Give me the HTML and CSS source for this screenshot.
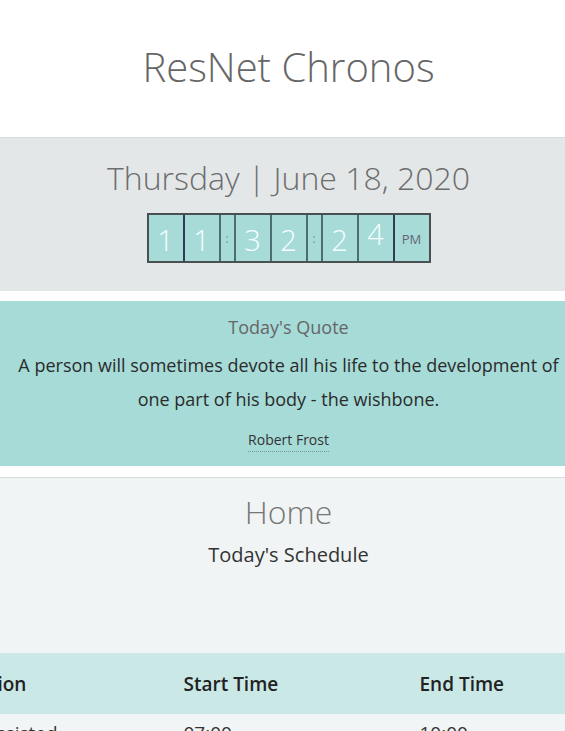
FILE: index.html
```html
<!DOCTYPE html>
<html lang="en">
<head>
<meta charset="utf-8">
<title>ResNet Chronos</title>
<link rel="stylesheet" href="styles.css">
</head>
<body>
<div class="page">
  <header class="brand">
    <h1 class="brand-title">ResNet Chronos</h1>
  </header>

  <section class="clock-panel">
    <h2 class="date">Thursday | June 18, 2020</h2>
    <div class="clock">
      <span class="cell digit">1</span>
      <span class="cell digit major">1</span>
      <span class="cell colon">:</span>
      <span class="cell digit">3</span>
      <span class="cell digit">2</span>
      <span class="cell colon">:</span>
      <span class="cell digit">2</span>
      <span class="cell digit"><span class="flip">4</span></span>
      <span class="cell ampm major">PM</span>
    </div>
  </section>

  <section class="quote-panel">
    <h3 class="quote-title">Today's Quote</h3>
    <p class="quote-text">A person will sometimes devote all his life to the development of one part of his body - the wishbone.</p>
    <p class="quote-author"><abbr class="author" title="Author">Robert Frost</abbr></p>
  </section>

  <section class="home-panel">
    <h2 class="home-title">Home</h2>
    <p class="home-sub">Today's Schedule</p>
    <div class="table-wrap">
      <table class="schedule">
        <thead>
          <tr><th>Location</th><th>Start Time</th><th>End Time</th></tr>
        </thead>
        <tbody>
          <tr><td>Lab Assisted</td><td>07:00</td><td>10:00</td></tr>
        </tbody>
      </table>
    </div>
  </section>
</div>
</body>
</html>
```

FILE: styles.css
```css
html, body {
  margin: 0;
  padding: 0;
  overflow: hidden;
  background: #ffffff;
}

body {
  font-family: "Open Sans", "Liberation Sans", sans-serif;
  color: #333;
}

.page {
  width: 577px;
}

.brand {
  background: #ffffff;
  padding: 43px 0 46px;
  border-bottom: 1px solid #d9dcdc;
}

.brand-title {
  margin: 0;
  text-align: center;
  font-size: 40px;
  line-height: 48px;
  font-weight: 300;
  color: #666;
}

.clock-panel {
  background: #e4e7e7;
  padding: 21px 0 28px;
  margin-bottom: 10px;
  display: flex;
  flex-direction: column;
  align-items: center;
}

.date {
  margin: 0;
  font-size: 32px;
  line-height: 37px;
  font-weight: 300;
  color: #6d6d6d;
}

.clock {
  margin-top: 17px;
  display: flex;
  border: 2px solid #4a4f52;
  height: 46px;
  background: #a6dbd8;
}

.cell {
  display: flex;
  justify-content: center;
  align-items: flex-start;
  background: #a6dbd8;
  color: #f6ffff;
  border-left: 2px solid #4e6d70;
  box-sizing: border-box;
}

.cell:first-child {
  border-left: none;
}

.cell.major {
  border-left-color: #2c3e50;
}

.digit {
  width: 36px;
  font-size: 29px;
  font-weight: 300;
  line-height: 46px;
  padding-top: 2px;
}

.cell:first-child.digit {
  width: 34px;
}

.flip {
  display: block;
  transform: translateY(-6px);
}

.colon {
  width: 15px;
  font-size: 12px;
  line-height: 46px;
  color: #7d8e8e;
  padding-top: 1px;
}

.ampm {
  width: 36px;
  font-size: 13px;
  line-height: 46px;
  color: #667;
  padding-top: 1px;
}

.quote-panel {
  background: #a6dbd8;
  padding: 14px 0 17px;
  text-align: center;
  margin-bottom: 11px;
}

.quote-title {
  margin: 0;
  font-size: 18px;
  line-height: 24px;
  font-weight: 400;
  color: #666;
}

.quote-text {
  margin: 9px auto 0;
  font-size: 18px;
  line-height: 34px;
  color: #2b2b2b;
  width: 565px;
}

.quote-author {
  margin: 15px 0 0;
  font-size: 14px;
  line-height: 18px;
  color: #333;
}

.author {
  text-decoration: none;
  border-bottom: 1px dotted #7a9a98;
  padding-bottom: 2px;
}

.home-panel {
  background: #f1f4f4;
  border-top: 1px solid #dadddd;
  padding-top: 17px;
  text-align: center;
}

.home-title {
  margin: 0;
  font-size: 32px;
  line-height: 34px;
  font-weight: 300;
  color: #777;
}

.home-sub {
  margin: 13px 0 0;
  font-size: 20px;
  line-height: 26px;
  color: #333;
}

.table-wrap {
  margin-top: 85px;
  display: flex;
  justify-content: center;
}

.schedule {
  flex: none;
  width: 708px;
  border-collapse: collapse;
  table-layout: fixed;
  text-align: left;
}

.schedule th {
  background: #c9e8e6;
  font-size: 19px;
  font-weight: 600;
  color: #222;
  height: 61px;
  padding: 0 13px;
  box-sizing: border-box;
}

.schedule td {
  background: #f2f5f5;
  font-size: 19px;
  line-height: 25px;
  color: #333;
  padding: 7px 13px 10px;
}
```
